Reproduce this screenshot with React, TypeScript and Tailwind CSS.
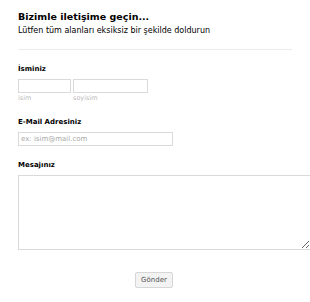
export default function App() {
    return (
        <div className="w-[310px] h-[302px] overflow-hidden bg-white font-['DejaVu_Sans',sans-serif] text-black">
            <div className="pl-[18px] pt-[11px]">
                <div className="w-[274px] border-b border-[#ececec] pb-[13px]">
                    <h1 className="text-[9.5px] font-bold leading-[12px]">Bizimle iletişime geçin...</h1>
                    <p className="text-[8px] leading-[10px] mt-[3px]">Lütfen tüm alanları eksiksiz bir şekilde doldurun</p>
                </div>

                <div className="mt-[14px]">
                    <label className="block text-[7px] font-bold leading-[10px]">İsminiz</label>
                    <div className="flex gap-[2px] mt-[5px]">
                        <div className="flex flex-col">
                            <input className="w-[53px] h-[14px] border border-[#dadada] outline-none" />
                            <span className="text-[6.5px] text-[#bbbbbb] leading-[8px] mt-[1px]">isim</span>
                        </div>
                        <div className="flex flex-col">
                            <input className="w-[75px] h-[14px] border border-[#dadada] outline-none" />
                            <span className="text-[6.5px] text-[#bbbbbb] leading-[8px] mt-[1px]">soyisim</span>
                        </div>
                    </div>
                </div>

                <div className="mt-[15px]">
                    <label className="block text-[7px] font-bold leading-[10px]">E-Mail Adresiniz</label>
                    <input
                        placeholder="ex: isim@mail.com"
                        className="block mt-[5px] w-[155px] h-[14px] border border-[#dadada] px-[2px] text-[7px] outline-none placeholder:text-[#a8a8a8]"
                    />
                </div>

                <div className="mt-[14px]">
                    <label className="block text-[7px] font-bold leading-[10px]">Mesajınız</label>
                    <textarea className="block mt-[5px] w-[293px] h-[75px] border border-[#dadada] outline-none" />
                </div>

                <div className="flex justify-center w-[272px] mt-[22px]">
                    <button className="h-[16px] w-[38px] border border-[#d6d6d6] rounded-[2px] bg-[#f3f3f3] text-[7px] text-[#555]">Gönder</button>
                </div>
            </div>
        </div>
    );
}
